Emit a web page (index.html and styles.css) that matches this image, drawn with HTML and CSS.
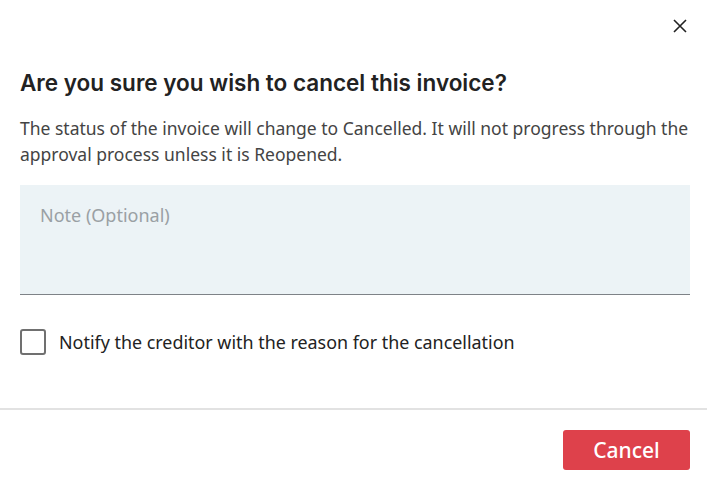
FILE: index.html
```html
<!DOCTYPE html>
<html>
<head>
<meta charset="utf-8">
<link rel="stylesheet" href="styles.css">
</head>
<body>
<div class="dialog">
  <div class="top">
    <button class="close" aria-label="Close">
      <svg width="14" height="14" viewBox="0 0 14 14"><path d="M1 1L13 13M13 1L1 13" stroke="#222" stroke-width="1.6" fill="none"/></svg>
    </button>
  </div>
  <div class="body">
    <h2 class="title">Are you sure you wish to cancel this invoice?</h2>
    <p class="desc">The status of the invoice will change to Cancelled. It will not progress through the approval process unless it is Reopened.</p>
    <div class="note">Note (Optional)</div>
    <label class="check"><span class="box"></span><span>Notify the creditor with the reason for the cancellation</span></label>
  </div>
  <div class="footer">
    <button class="btn">Cancel</button>
  </div>
</div>
</body>
</html>
```
FILE: styles.css
```css
html, body { margin: 0; padding: 0; background: #fff; }
body { font-family: "Noto Sans", sans-serif; color: #333; }
.dialog { width: 707px; height: 478px; display: flex; flex-direction: column; }
.top { display: flex; justify-content: flex-end; padding: 19px 20px 0 0; }
.close { border: 0; background: none; padding: 0; width: 14px; height: 14px; display: flex; align-items: center; justify-content: center; }
.body { padding: 0 16px 0 20px; }
.title { font-family: Inter, sans-serif; font-weight: 600; font-size: 22.5px; line-height: 28px; color: #222; margin: 36px 0 0 0; }
.desc { font-size: 17.5px; line-height: 26px; color: #444; margin: 18px 0 0 0; }
.note { margin-top: 18px; height: 110px; background: #ecf3f6; border-bottom: 1px solid #7e8287; padding: 18px 20px 0; box-sizing: border-box; font-size: 18px; line-height: 24px; color: #9aa0a4; margin-right: 1px; }
.check { display: flex; align-items: center; gap: 13px; margin-top: 34px; font-size: 17.9px; line-height: 26px; color: #222; }
.box { width: 22px; height: 22px; border: 2px solid #707070; border-radius: 3px; flex: none; }
.footer { margin-top: 53px; border-top: 2px solid #e2e2e2; display: flex; justify-content: flex-end; padding: 20px 17px 0 0; }
.btn { width: 127px; height: 40px; border: 0; border-radius: 3px; background: #de414b; color: #fff; font-family: "Noto Sans", sans-serif; font-weight: 500; font-size: 21px; padding: 0; }
```
